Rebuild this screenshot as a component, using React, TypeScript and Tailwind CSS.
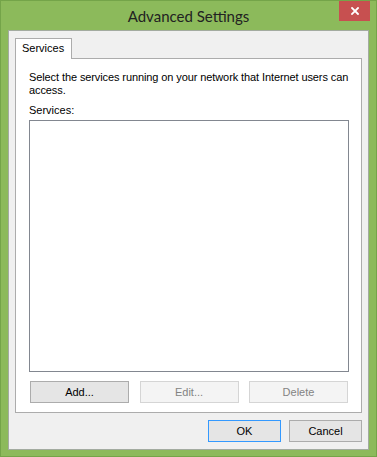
import React from "react";

const ui = "font-['Liberation_Sans',Arial,sans-serif] text-[11px] leading-[13px]";

function Button({
  label,
  width,
  disabled,
  primary,
}: {
  label: string;
  width: string;
  disabled?: boolean;
  primary?: boolean;
}) {
  const base = `${width} h-[22px] flex items-center justify-center ${ui}`;
  if (disabled) {
    return <div className={`${base} bg-[#f4f4f4] border border-[#d5d5d5] text-[#838383]`}>{label}</div>;
  }
  if (primary) {
    return <div className={`${base} bg-[#e5e5e5] border border-[#3399ff] text-black`}>{label}</div>;
  }
  return <div className={`${base} bg-[#e5e5e5] border border-[#acacac] text-black`}>{label}</div>;
}

export default function App() {
  return (
    <div className="w-[377px] h-[457px] bg-[#8cba5b] border border-[#74a449] flex flex-col">
      {/* Title bar */}
      <div className="relative h-[29px] flex items-center justify-center">
        <span className="font-['Lato','Open_Sans',sans-serif] text-[15px] text-[#222] mt-[1px]">Advanced Settings</span>
        <div className="absolute top-0 right-[6px] w-[31px] h-[20px] bg-[#c75050] flex items-center justify-center">
          <svg width="8" height="8" viewBox="0 0 8 8">
            <path d="M1 1 L7 7 M7 1 L1 7" stroke="white" strokeWidth="1.8" strokeLinecap="square" />
          </svg>
        </div>
      </div>

      {/* Client area */}
      <div className="mx-[7px] h-[420px] bg-[#f0f0f0] border border-[#a3aba0] pl-[6px] pt-[7px] pr-[6px] flex flex-col">
        {/* Tab strip */}
        <div className="flex">
          <div className={`relative z-10 w-[57px] h-[21px] -mb-[1px] bg-white border border-b-0 border-[#acacac] pl-[6px] pt-[3px] ${ui} text-black`}>
            Services
          </div>
        </div>

        {/* Tab panel */}
        <div className="w-[347px] h-[355px] bg-white border border-[#acacac] pl-[13px] pt-[12px] flex flex-col">
          <p className={`w-[332px] tracking-[-0.1px] ${ui} text-black`}>
            Select the services running on your network that Internet users can access.
          </p>
          <p className={`mt-[7px] ${ui} text-black`}>Services:</p>
          <div className="mt-[3px] w-[320px] h-[252px] border border-[#828790] bg-white" />
          <div className="mt-[9px] ml-[1px] w-[318px] flex justify-between">
            <Button label="Add..." width="w-[99px]" />
            <Button label="Edit..." width="w-[99px]" disabled />
            <Button label="Delete" width="w-[99px]" disabled />
          </div>
        </div>

        {/* Dialog buttons */}
        <div className="mt-[7px] flex justify-end gap-[8px]">
          <Button label="OK" width="w-[73px]" primary />
          <Button label="Cancel" width="w-[73px]" />
        </div>
      </div>
    </div>
  );
}
